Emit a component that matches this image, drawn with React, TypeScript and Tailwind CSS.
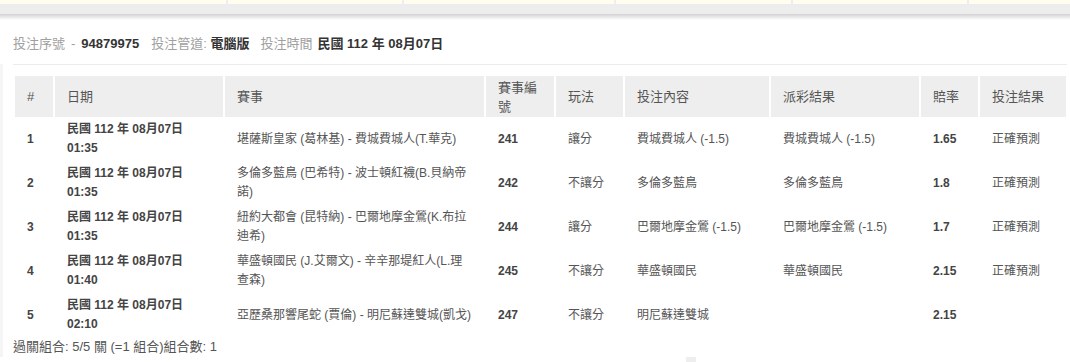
const rows = [
  {
    no: "1",
    time: "01:35",
    match: "堪薩斯皇家 (葛林基) - 費城費城人(T.華克)",
    code: "241",
    play: "讓分",
    bet: "費城費城人 (-1.5)",
    payout: "費城費城人 (-1.5)",
    odds: "1.65",
    result: "正確預測",
  },
  {
    no: "2",
    time: "01:35",
    match: "多倫多藍鳥 (巴希特) - 波士頓紅襪(B.貝納帝諾)",
    code: "242",
    play: "不讓分",
    bet: "多倫多藍鳥",
    payout: "多倫多藍鳥",
    odds: "1.8",
    result: "正確預測",
  },
  {
    no: "3",
    time: "01:35",
    match: "紐約大都會 (昆特納) - 巴爾地摩金鶯(K.布拉迪希)",
    code: "244",
    play: "讓分",
    bet: "巴爾地摩金鶯 (-1.5)",
    payout: "巴爾地摩金鶯 (-1.5)",
    odds: "1.7",
    result: "正確預測",
  },
  {
    no: "4",
    time: "01:40",
    match: "華盛頓國民 (J.艾爾文) - 辛辛那堤紅人(L.理查森)",
    code: "245",
    play: "不讓分",
    bet: "華盛頓國民",
    payout: "華盛頓國民",
    odds: "2.15",
    result: "正確預測",
  },
  {
    no: "5",
    time: "02:10",
    match: "亞歷桑那響尾蛇 (賈倫) - 明尼蘇達雙城(凱戈)",
    code: "247",
    play: "不讓分",
    bet: "明尼蘇達雙城",
    payout: "",
    odds: "2.15",
    result: "",
  },
];

const headers = ["#", "日期", "賽事", "賽事編號", "玩法", "投注內容", "派彩結果", "賠率", "投注結果"];

function TopBar() {
  return (
    <div>
      <div className="flex h-[4px] gap-[2px] bg-[#eeeeee]">
        <div className="w-[226px] bg-[#fffdf0]" />
        <div className="w-[174px] bg-[#fffdf0]" />
        <div className="w-[210px] bg-[#fffdf0]" />
        <div className="w-[175px] bg-[#fffdf0]" />
        <div className="w-[174px] bg-[#fffdf0]" />
        <div className="flex-1 bg-[#fffdf0]" />
      </div>
      <div className="h-[10px] bg-[#ededed]" />
      <div className="h-[6px] bg-linear-to-b from-[#d2d2d2] to-white" />
    </div>
  );
}

export default function App() {
  return (
    <div className="relative h-[362px] w-[1070px] overflow-hidden bg-white font-['Liberation_Sans','Noto_Sans_CJK_TC',sans-serif]">
      <TopBar />

      <div className="pl-[13px] pt-[14px] text-[13px] leading-[20px]">
        <span className="text-[#a0a0a0]">投注序號</span>
        <span className="mx-[6px] text-[#a0a0a0]">-</span>
        <span className="font-bold text-[#333]">94879975</span>
        <span className="ml-[12px] text-[#a0a0a0]">投注管道: </span>
        <span className="font-semibold text-[#333]">電腦版</span>
        <span className="ml-[11px] text-[#a0a0a0]">投注時間</span>
        <span className="ml-[5px] font-semibold text-[#333]">民國 112 年 08月07日</span>
      </div>

      <div className="border-l-[3px] border-[#f5f5f5] pl-[10px] pr-[3px]">
        <div className="mt-[10px] h-px bg-[#ececec]" />

        <table className="mt-[11px] w-[1055px] table-fixed border-separate border-spacing-x-[2px] border-spacing-y-0">
          <colgroup>
            <col className="w-[38px]" />
            <col className="w-[168px]" />
            <col className="w-[259px]" />
            <col className="w-[68px]" />
            <col className="w-[67px]" />
            <col className="w-[144px]" />
            <col className="w-[148px]" />
            <col className="w-[57px]" />
            <col className="w-[86px]" />
          </colgroup>
          <thead>
            <tr>
              {headers.map((h) => (
                <th
                  key={h}
                  className="h-[41px] bg-[#eeeeee] px-3 py-[1px] text-left align-middle text-[13px] font-normal leading-[19px] text-[#555]"
                >
                  {h}
                </th>
              ))}
            </tr>
          </thead>
          <tbody className="text-[12px] leading-[19px] text-[#555]">
            {rows.map((r) => (
              <tr key={r.no}>
                <td className="h-[44px] px-3 align-middle font-bold text-[#444]">{r.no}</td>
                <td className="px-3 align-middle font-semibold text-[#444]">
                  民國 112 年 08月07日
                  <br />
                  {r.time}
                </td>
                <td className="px-3 align-middle">{r.match}</td>
                <td className="px-3 align-middle font-bold text-[#444]">{r.code}</td>
                <td className="px-3 align-middle">{r.play}</td>
                <td className="px-3 align-middle">{r.bet}</td>
                <td className="px-3 align-middle">{r.payout}</td>
                <td className="px-3 align-middle font-bold text-[#444]">{r.odds}</td>
                <td className="px-3 align-middle">{r.result}</td>
              </tr>
            ))}
          </tbody>
        </table>

        <div className="text-[13px] leading-[20px] text-[#555]">過關組合: 5/5 關 (=1 組合)組合數: 1</div>
      </div>

      <div className="absolute left-[686px] top-[357px] h-[6px] w-[10px] bg-[#eeeeee]" />
    </div>
  );
}
